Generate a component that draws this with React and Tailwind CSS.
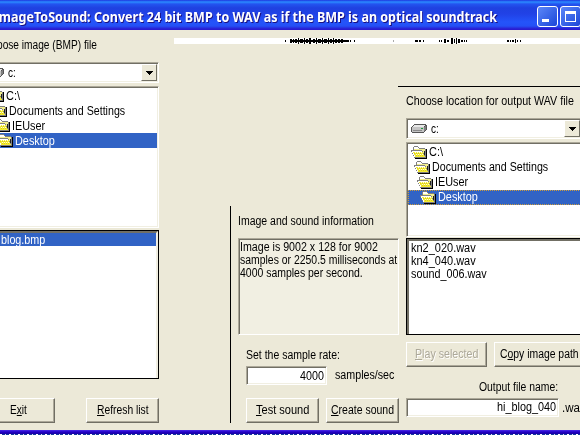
import { useLayoutEffect, useRef, useState } from "react";

function T({ w, children, className = "" }) {
  const ref = useRef(null);
  const [s, setS] = useState(1);
  useLayoutEffect(() => {
    setS(w / ref.current.offsetWidth);
  }, [w]);
  return (
    <span className={"block shrink-0 whitespace-pre " + className} style={{ width: w }}>
      <span ref={ref} className="inline-block origin-left" style={{ transform: `scaleX(${s})` }}>
        {children}
      </span>
    </span>
  );
}

function Button({ className = "", children }) {
  return (
    <div className={"flex h-[25px] shrink-0 items-center justify-center border border-t-white border-l-white border-r-[#716f64] border-b-[#716f64] bg-[#ece9d8] shadow-[inset_-1px_-1px_0_#aca899] " + className}>
      {children}
    </div>
  );
}

const sunken = "border border-t-[#aca899] border-l-[#aca899] border-r-white border-b-white shadow-[inset_1px_1px_0_#716f64,inset_-1px_-1px_0_#f1efe2] ";

function Folder() {
  return (
    <svg className="h-[13px] w-4 shrink-0" viewBox="0 0 16 13" shapeRendering="crispEdges">
      <path d="M4 12h11V3h1v10H4z" fill="#000" />
      <path d="M3 0h4v1h1v1h6v1h1v9H3V6H2V1h1z" fill="#808080" />
      <path d="M3 1h4v1h1v1h6v1H3z" fill="#fff" />
      <path d="M3 3h11v7H3z" fill="#f2ee8c" />
      <path d="M0 4h11v1h1v2h1v2h1v3H3v-2H2V8H1V6H0z" fill="#808080" />
      <path d="M1 5h10v1h1v2h1v2h1v1H4V9H3V7H1z" fill="#f4ec30" />
      <path d="M1 5h10v1H2v1h1v2h1v2H3V9H2V7H1z" fill="#fff" />
      <path d="M4 6.5h7M5 8.5h7" stroke="#fffde0" strokeDasharray="1 1" />
      <path d="M3 7.5h8M5 9.5h7" stroke="#d8cc20" strokeDasharray="1 1" />
      <path d="M13 5h1v4h-1z" fill="#222" />
    </svg>
  );
}

function Drive() {
  return (
    <svg className="h-[9px] w-4 shrink-0" viewBox="0 0 16 9" shapeRendering="crispEdges">
      <path d="M3 0h12v1h1v5h-1v1h-1v1h-1v1H1V8H0V3h1V2h1V1h1z" fill="#555" />
      <path d="M3 1h11v1h-1v1H2V2h1z" fill="#e8e8e8" />
      <path d="M1 3h12v5H1z" fill="#c4c4c4" />
      <path d="M14 2h1v4h-1v1h-1V3h1z" fill="#808080" />
      <path d="M2 6h9v1H2z" fill="#8a8a8a" />
      <path d="M10 4h2v1h-2z" fill="#1a9a3a" />
    </svg>
  );
}

function Combo({ className = "" }) {
  return (
    <div className={"flex h-[21px] shrink-0 items-center bg-white py-[2px] pl-[4px] pr-[1px] " + sunken + className}>
      <Drive />
      <T w={8} className="ml-1 pt-[1px]">c:</T>
      <div className="ml-auto flex h-[17px] w-4 items-center justify-center border border-t-white border-l-white border-r-[#716f64] border-b-[#716f64] bg-[#ece9d8]">
        <svg className="h-1 w-[7px]" viewBox="0 0 7 4" shapeRendering="crispEdges">
          <path d="M0 0h7v1H6v1H5v1H4v1H3V3H2V2H1V1H0z" />
        </svg>
      </div>
    </div>
  );
}

function Dirs({ className = "", dotted }) {
  const text = dotted ? "ml-[2px] pb-[1px]" : "ml-[2px] pt-[1px]";
  return (
    <div className={"shrink-0 overflow-hidden bg-white " + (dotted ? "pl-[1px] pt-[2px] " : "px-[1px] pt-[1px] ") + sunken + className}>
      <div className="flex h-[15px] items-center pl-[3px]"><Folder /><T w={14} className={text}>C:\</T></div>
      <div className="flex h-[15px] items-center pl-[6px]"><Folder /><T w={116} className={text}>Documents and Settings</T></div>
      <div className="flex h-[15px] items-center pl-[9px]"><Folder /><T w={33} className={text}>IEUser</T></div>
      <div className={"flex h-[15px] items-center bg-[#3163c5] pl-[12px] text-white " + (dotted ? "outline-1 -outline-offset-1 outline-dotted outline-[#ce9c3a]" : "")}>
        <Folder /><T w={40} className={text}>Desktop</T>
      </div>
    </div>
  );
}

// [x, height, width] bars of the optical track
const WAVE = [
  [111, 2, 1], [116, 4, 2], [119, 4, 1], [121, 4, 2], [124, 6, 1], [126, 4, 3], [130, 6, 1], [132, 4, 2], [135, 6, 2],
  [139, 4, 2], [142, 6, 1], [144, 4, 3], [148, 6, 1], [150, 4, 3], [154, 6, 1], [156, 4, 2], [159, 6, 1], [161, 4, 2],
  [164, 4, 2], [167, 4, 2], [170, 2, 2], [173, 2, 2], [176, 2, 1], [180, 2, 1], [241, 2, 3], [245, 2, 2], [249, 2, 1],
  [265, 2, 1], [267, 2, 1], [270, 4, 2], [273, 2, 2], [277, 6, 2], [280, 4, 1], [282, 6, 1], [284, 4, 2], [287, 2, 2],
  [290, 2, 1], [292, 2, 1], [333, 2, 2], [336, 2, 1], [338, 2, 2], [341, 4, 1], [343, 2, 1], [346, 2, 1],
];

export default function App() {
  return (
    <div className="flex h-[435px] w-[580px] flex-col overflow-hidden bg-[#ece9d8] font-['Liberation_Sans',Arial,sans-serif] text-[12.5px] leading-[13px] text-black">
      <header className="flex h-[30px] shrink-0 items-center bg-[linear-gradient(180deg,#1f35e0_0,#2a8cff_2px,#2354f0_4px,#1f41e0_8px,#2142e6_14px,#2454fa_22px,#2450f6_26px,#2a1cd0_29px,#2a1cd0_30px)]">
        <T w={503} className="-ml-[6px] pt-[4px] font-['Noto_Sans','Open_Sans',sans-serif] text-[13.5px] font-bold text-white [text-shadow:1px_1px_0_#1a1080]">
          ImageToSound: Convert 24 bit BMP to WAV as if the BMP is an optical soundtrack
        </T>
        <div className="ml-[40px] mt-[3px] flex gap-[2px]">
          <div className="relative h-[21px] w-[21px] rounded-[3px] border border-white bg-gradient-to-br from-[#5c86f8] to-[#1c44d8]">
            <i className="absolute bottom-[4px] left-[4px] h-[3px] w-[7px] bg-white" />
          </div>
          <div className="relative h-[21px] w-[21px] rounded-[3px] border border-white bg-gradient-to-br from-[#5c86f8] to-[#1c44d8]">
            <i className="absolute left-[4px] top-[4px] h-[11px] w-[11px] border border-t-[3px] border-white" />
          </div>
        </div>
      </header>

      <main className="flex h-[400px] shrink-0">
        <section className="flex w-[174px] shrink-0 flex-col overflow-hidden">
          <T w={113} className="-ml-[16px] mt-[9px]">Choose image (BMP) file</T>
          <Combo className="-ml-[17px] mt-[10px] w-[176px]" />
          <Dirs className="-ml-[17px] mt-[3px] h-[142px] w-[176px]" />
          <div className="mt-[2px] h-[149px] w-[159px] shrink-0 border border-l-0 border-black">
            <div className="h-full border-t-2 border-r-2 border-t-[#716f64] border-r-[#f1efe2] bg-white">
              <div className="flex h-[13px] items-center bg-[#3163c5] text-white"><T w={50} className="-ml-[5px] pt-[1px]">_blog.bmp</T></div>
            </div>
          </div>
          <div className="mt-[19px] flex">
            <Button className="-ml-[18px] w-[73px]"><T w={17}>E<u>x</u>it</T></Button>
            <Button className="ml-[31px] w-[73px]"><T w={52}><u>R</u>efresh list</T></Button>
          </div>
        </section>

        <section className="flex min-w-0 flex-1 flex-col">
          <svg className="mt-2 h-[6px] w-full shrink-0 bg-white" shapeRendering="crispEdges">
            <path d="M116 3h58" stroke="#000" strokeWidth="2" />
            {WAVE.map(([x, h, w]) => <rect key={x} x={x} y={3 - h / 2} width={w} height={h} />)}
            <path d="M219 2h1v2h-1z" fill="#aaa" />
          </svg>
          <div className="flex flex-1">
            <div className="ml-14 mt-[162px] flex h-[217px] w-[168px] shrink-0 flex-col border-l border-black">
              <T w={136} className="ml-[7px] mt-[9px]">Image and sound information</T>
              <div className={"ml-[7px] mt-[10px] h-[97px] w-[161px] shrink-0 bg-[#f1efe2] pl-[1px] pt-[2px] " + sunken}>
                <T w={138}>Image is 9002 x 128 for 9002</T>
                <T w={157}>samples or 2250.5 milliseconds at</T>
                <T w={123}>4000 samples per second.</T>
              </div>
              <T w={94} className="ml-[15px] mt-[14px]">Set the sample rate:</T>
              <div className="ml-[15px] mt-[4px] flex items-center">
                <div className={"flex h-[19px] w-[81px] items-center justify-end bg-white pr-[2px] " + sunken}><T w={24} className="pt-[1px]">4000</T></div>
                <T w={59} className="ml-2">samples/sec</T>
              </div>
              <div className="ml-[15px] mt-[13px] flex gap-[7px]">
                <Button className="w-[73px]"><T w={53}><u>T</u>est sound</T></Button>
                <Button className="w-[73px]"><T w={63}><u>C</u>reate sound</T></Button>
              </div>
            </div>

            <div className="mt-[42px] flex w-[182px] shrink-0 flex-col border-t border-black">
              <T w={168} className="ml-[8px] mt-[8px]">Choose location for output WAV file</T>
              <Combo className="ml-[8px] mt-[10px] w-[176px]" />
              <Dirs dotted className="ml-[8px] mt-[3px] h-[95px] w-[190px]" />
              <div className="ml-[8px] mt-[1px] h-[97px] shrink-0 border border-r-0 border-black">
                <div className="h-full border-2 border-r-0 border-b-0 border-[#716f64] bg-white pl-[2px] pt-[1px]">
                  <T w={65}>kn2_020.wav</T>
                  <T w={65}>kn4_040.wav</T>
                  <T w={76}>sound_006.wav</T>
                </div>
              </div>
              <div className="ml-[8px] mt-[7px] flex gap-[7px]">
                <Button className="w-[81px] text-[#aca899] [text-shadow:1px_1px_0_#fff]"><T w={63}><u>P</u>lay selected</T></Button>
                <Button className="w-[90px]"><T w={79}>C<u>o</u>py image path</T></Button>
              </div>
              <T w={79} className="ml-[81px] mt-[14px]">Output file name:</T>
              <div className="ml-[8px] mt-[4px] flex items-center">
                <div className={"flex h-[19px] w-[153px] shrink-0 items-center justify-end bg-white pr-[2px] " + sunken}><T w={59}>hi_blog_040</T></div>
                <T w={24} className="ml-[3px] pt-[2px]">.wav</T>
              </div>
            </div>
          </div>
        </section>
      </main>
      <div className="h-1 shrink-0 bg-[linear-gradient(#4a2ce8,#2200c8_50%,#1800a0)]" />
      <div className="h-px shrink-0 bg-[repeating-linear-gradient(90deg,#fff_0_2px,#123a9c_2px_5px,#dde_5px_6px,#123a9c_6px_9px)]" />
    </div>
  );
}
